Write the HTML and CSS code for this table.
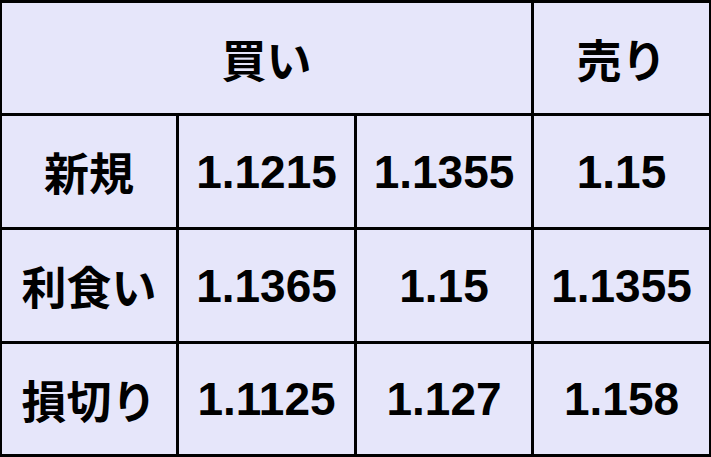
FILE: index.html
```html
<!DOCTYPE html>
<html lang="ja">
<head>
<meta charset="utf-8">
<link rel="stylesheet" href="styles.css">
</head>
<body>
<div class="grid">
  <div class="cell jp span3">買い</div>
  <div class="cell jp">売り</div>
  <div class="cell jp">新規</div>
  <div class="cell num">1.1215</div>
  <div class="cell num">1.1355</div>
  <div class="cell num">1.15</div>
  <div class="cell jp">利食い</div>
  <div class="cell num">1.1365</div>
  <div class="cell num">1.15</div>
  <div class="cell num">1.1355</div>
  <div class="cell jp">損切り</div>
  <div class="cell num">1.1125</div>
  <div class="cell num">1.127</div>
  <div class="cell num">1.158</div>
</div>
</body>
</html>
```
FILE: styles.css
```css
html, body {
  margin: 0;
  padding: 0;
  background: #e6e6fa;
}
.grid {
  width: 711px;
  height: 457px;
  box-sizing: border-box;
  display: grid;
  grid-template-columns: 174px 175px 174px 175px;
  grid-template-rows: 110px 111px 111px 110px;
  gap: 3px;
  padding: 3px 2px;
  background: #000;
}
.cell {
  background: #e6e6fa;
  display: flex;
  align-items: center;
  justify-content: center;
  color: #000;
}
.span3 {
  grid-column: span 3;
}
.num {
  font-family: "Liberation Sans", Arial, sans-serif;
  font-weight: 700;
  font-size: 46px;
}
.jp {
  font-family: "Noto Sans CJK JP", sans-serif;
  font-weight: 700;
  font-size: 45px;
}
```
